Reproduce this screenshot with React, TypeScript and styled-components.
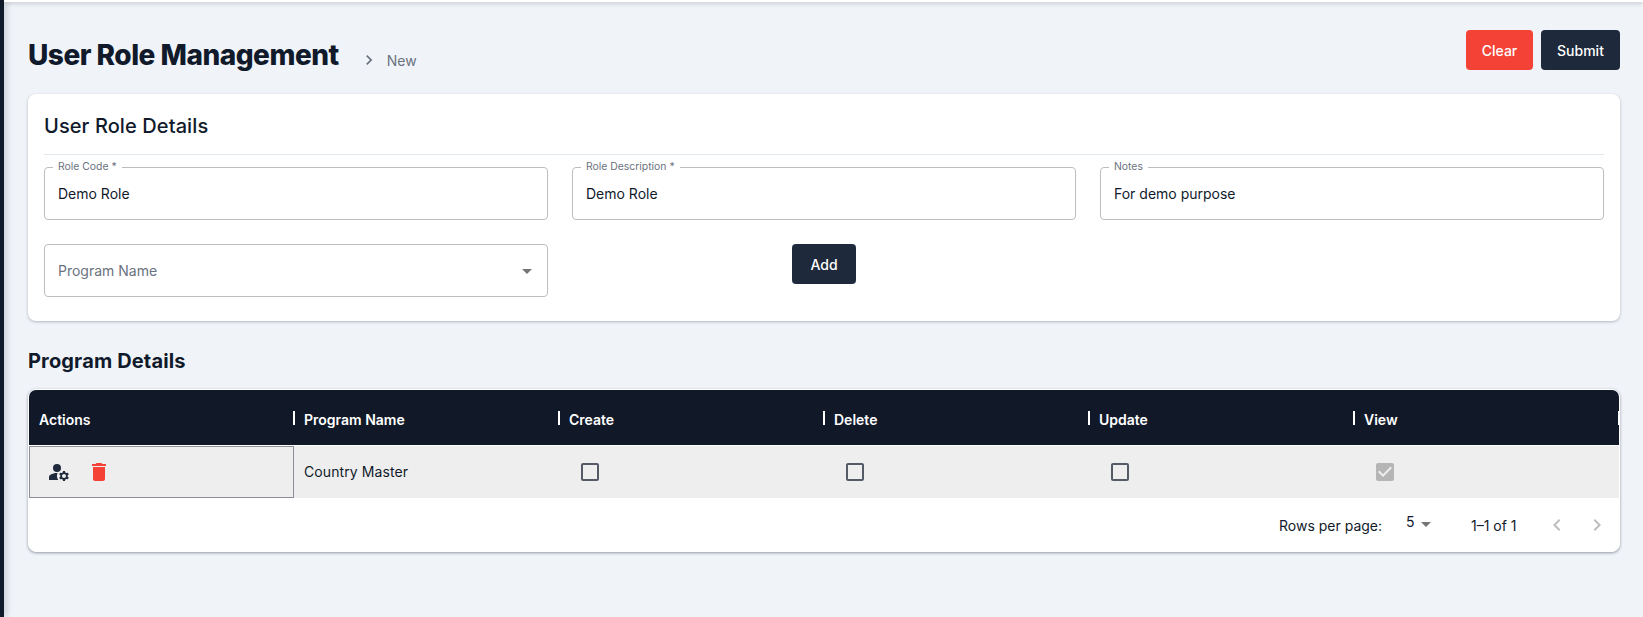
import React from "react";
import styled, { createGlobalStyle } from "styled-components";
import {
  MdManageAccounts,
  MdDelete,
  MdCheckBox,
  MdCheckBoxOutlineBlank,
  MdArrowDropDown,
  MdChevronLeft,
  MdChevronRight,
} from "react-icons/md";

const Global = createGlobalStyle`
  * { box-sizing: border-box; }
  html, body { margin: 0; padding: 0; height: 100%; }
  body { font-family: Inter, "Noto Sans", sans-serif; color: #111827; background: #f0f4f9; }
`;

const Shell = styled.div`
  display: flex;
  height: 617px;
  overflow: hidden;
  background: #f0f4f9;
`;
const Sidebar = styled.aside`
  width: 4px;
  flex: none;
  background: #111a2b;
  box-shadow: 2px 0 6px rgba(17, 26, 43, 0.25);
`;
const Main = styled.main`
  flex: 1;
  min-width: 0;
`;
const TopBar = styled.div`
  height: 2px;
  background: #fff;
  box-shadow: 0 1px 4px rgba(0, 0, 0, 0.3);
`;
const Content = styled.div`
  padding: 28px 23px 0 24px;
`;
const PageHeader = styled.header`
  display: flex;
  align-items: flex-start;
  height: 40px;
  margin-bottom: 24px;
`;
const Title = styled.h1`
  margin: 0;
  padding-top: 5px;
  font-size: 28px;
  line-height: 40px;
  font-weight: 800;
  letter-spacing: -0.5px;
  color: #111a2b;
`;
const Crumb = styled.div`
  display: flex;
  align-items: center;
  margin-left: 20px;
  padding-top: 20px;
  font-size: 14px;
  color: #6b7280;
  gap: 8px;
`;
const HeaderActions = styled.div`
  margin-left: auto;
  display: flex;
  gap: 8px;
`;
const Button = styled.button<{ $tone?: "danger" | "dark"; $width: number }>`
  height: 40px;
  width: ${(p) => p.$width}px;
  border: 0;
  border-radius: 4px;
  background: ${(p) => (p.$tone === "danger" ? "#f44336" : "#1e293b")};
  color: #fff;
  font: 500 14px Inter, sans-serif;
  padding: 1px 0 0;
`;
const Card = styled.section`
  background: #fff;
  border-radius: 8px;
  box-shadow: 0 1px 3px rgba(30, 41, 59, 0.3);
`;
const DetailsCard = styled(Card)`
  height: 227px;
  padding: 16px 16px 0;
`;
const CardTitle = styled.h2`
  margin: 0;
  font-size: 20px;
  line-height: 32px;
  font-weight: 500;
  letter-spacing: 0.1px;
  color: #111a2b;
  padding-bottom: 12px;
  border-bottom: 1px solid #e2e8f0;
`;
const FormGrid = styled.div`
  display: grid;
  grid-template-columns: repeat(3, 1fr);
  gap: 24px;
  margin-top: 12px;
`;
const Field = styled.div`
  position: relative;
  height: 53px;
  border: 1px solid #bdbdbd;
  border-radius: 4px;
  padding: 0 13px;
  display: flex;
  align-items: center;
  justify-content: space-between;
  font-size: 14px;
  color: #111a2b;
`;
const FieldLabel = styled.label`
  position: absolute;
  top: -8px;
  left: 8px;
  padding: 0 5px;
  background: #fff;
  font-size: 10.4px;
  line-height: 14px;
  color: #6b7280;
`;
const Placeholder = styled.span`
  color: #6b7280;
`;
const SelectArrow = styled(MdArrowDropDown)`
  color: #757575;
  font-size: 24px;
  margin-right: -5px;
`;
const AddCell = styled.div`
  display: flex;
  justify-content: center;
`;
const SectionTitle = styled.h3`
  margin: 27px 0 15px;
  font-size: 20px;
  line-height: 26px;
  font-weight: 700;
  letter-spacing: 0.15px;
  color: #111a2b;
`;
const TableCard = styled(Card)`
  height: 163px;
  overflow: hidden;
  border: 1px solid #fff;
  box-shadow: 0 1px 3px rgba(30, 41, 59, 0.45);
`;
const Row = styled.div`
  display: grid;
  grid-template-columns: repeat(6, 1fr);
`;
const HeadRow = styled(Row)`
  height: 55px;
  background: #111928;
`;
const HeadCell = styled.div`
  position: relative;
  display: flex;
  align-items: center;
  padding: 3px 10px 0;
  color: #fff;
  font-size: 14px;
  font-weight: 600;
  &::after {
    content: "";
    position: absolute;
    right: -1px;
    top: 21px;
    width: 2px;
    height: 14px;
    background: #fff;
  }
`;
const BodyRow = styled(Row)`
  height: 52px;
  margin-top: 1px;
  background: #eeeeee;
`;
const BodyCell = styled.div`
  display: flex;
  align-items: center;
  padding: 0 10px 2px;
  font-size: 14px;
  letter-spacing: 0.1px;
  color: #111a2b;
`;
const ActionsCell = styled(BodyCell)`
  border: 1px solid #8a8f99;
  padding: 0 0 0 17px;
  gap: 16px;
  color: #1e293b;
  font-size: 24px;
`;
const DeleteIcon = styled(MdDelete)`
  color: #f44336;
`;
const CheckCell = styled(BodyCell)<{ $disabled?: boolean }>`
  padding: 0 0 0 19px;
  font-size: 24px;
  color: ${(p) => (p.$disabled ? "#b5b5b5" : "#555b66")};
`;
const Pagination = styled.footer`
  display: flex;
  align-items: center;
  height: 54px;
  padding-left: 1250px;
  font-size: 14px;
  color: #111a2b;
`;
const RowsLabel = styled.span`
  width: 127px;
  padding-top: 1px;
`;
const RowsValue = styled.span`
  display: flex;
  align-items: center;
  width: 65px;
  padding-bottom: 8px;
  color: #111a2b;
  & svg { color: #757575; font-size: 24px; margin-left: -1px; margin-top: 6px; }
`;
const Range = styled.span`
  width: 74px;
  padding-top: 1px;
`;
const PagerIcons = styled.span`
  display: flex;
  gap: 16px;
  font-size: 24px;
  color: #bdbdbd;
`;

const columns = ["Actions", "Program Name", "Create", "Delete", "Update", "View"];

export default function App() {
  return (
    <Shell>
      <Global />
      <Sidebar />
      <Main>
        <TopBar />
        <Content>
          <PageHeader>
            <Title>User Role Management</Title>
            <Crumb>
              <MdChevronRight size={20} color="#6b7280" />
              <span>New</span>
            </Crumb>
            <HeaderActions>
              <Button $tone="danger" $width={67}>Clear</Button>
              <Button $width={79}>Submit</Button>
            </HeaderActions>
          </PageHeader>

          <DetailsCard>
            <CardTitle>User Role Details</CardTitle>
            <FormGrid>
              <Field><FieldLabel>Role Code *</FieldLabel>Demo Role</Field>
              <Field><FieldLabel>Role Description *</FieldLabel>Demo Role</Field>
              <Field><FieldLabel>Notes</FieldLabel>For demo purpose</Field>
              <Field>
                <Placeholder>Program Name</Placeholder>
                <SelectArrow />
              </Field>
              <AddCell><Button $width={64}>Add</Button></AddCell>
            </FormGrid>
          </DetailsCard>

          <SectionTitle>Program Details</SectionTitle>
          <TableCard>
            <HeadRow>
              {columns.map((c) => <HeadCell key={c}>{c}</HeadCell>)}
            </HeadRow>
            <BodyRow>
              <ActionsCell>
                <MdManageAccounts />
                <DeleteIcon />
              </ActionsCell>
              <BodyCell>Country Master</BodyCell>
              <CheckCell><MdCheckBoxOutlineBlank /></CheckCell>
              <CheckCell><MdCheckBoxOutlineBlank /></CheckCell>
              <CheckCell><MdCheckBoxOutlineBlank /></CheckCell>
              <CheckCell $disabled><MdCheckBox /></CheckCell>
            </BodyRow>
            <Pagination>
              <RowsLabel>Rows per page:</RowsLabel>
              <RowsValue>5<MdArrowDropDown /></RowsValue>
              <Range>1–1 of 1</Range>
              <PagerIcons><MdChevronLeft /><MdChevronRight /></PagerIcons>
            </Pagination>
          </TableCard>
        </Content>
      </Main>
    </Shell>
  );
}
